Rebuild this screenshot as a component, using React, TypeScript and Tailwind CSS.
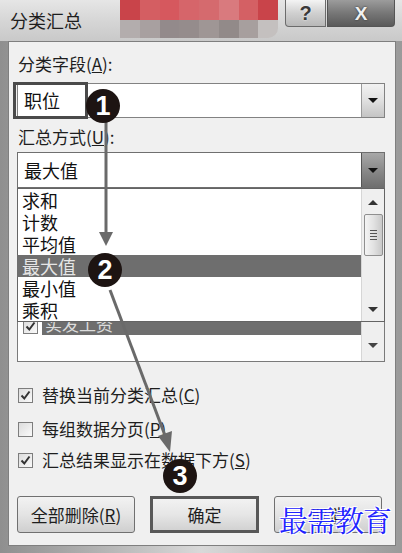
import React from 'react';

const cjk = { fontFamily: '"Noto Sans CJK SC", "Noto Sans", sans-serif' };

function DropButton({ pressed }: { pressed?: boolean }) {
  return (
    <div
      className={
        pressed
          ? 'w-[23px] h-full flex items-center justify-center border-l border-[#555] bg-gradient-to-b from-[#a8a8a8] via-[#8a8a8a] to-[#6f6f6f]'
          : 'w-[23px] h-full flex items-center justify-center border-l border-[#9a9a9a] bg-gradient-to-b from-[#f2f2f2] via-[#e0e0e0] to-[#c4c4c4]'
      }
    >
      <div className="w-0 h-0 border-l-[5px] border-r-[5px] border-t-[5px] border-l-transparent border-r-transparent border-t-[#111]" />
    </div>
  );
}

function CheckBox({ checked }: { checked?: boolean }) {
  return (
    <div className="w-[15px] h-[15px] shrink-0 border border-[#7d7d7d] bg-gradient-to-br from-[#dcdcdc] to-[#fafafa] flex items-center justify-center">
      {checked && (
        <svg width="11" height="11" viewBox="0 0 11 11">
          <path d="M1.5 5.5 L4.3 8.5 L9.5 1.5" fill="none" stroke="#333" strokeWidth="2" />
        </svg>
      )}
    </div>
  );
}

function Marker({ n, className }: { n: string; className: string }) {
  return (
    <div
      className={
        'absolute w-[34px] h-[34px] rounded-full bg-[#1d1412] text-white flex items-center justify-center text-[27px] font-bold leading-none ' +
        className
      }
      style={{ fontFamily: '"Liberation Sans", Arial, sans-serif' }}
    >
      {n}
    </div>
  );
}

export default function App() {
  const items = ['求和', '计数', '平均值', '最大值', '最小值', '乘积'];
  return (
    <div
      className="relative w-[402px] h-[553px] overflow-hidden bg-gradient-to-r from-[#8f8f8f] via-[#d9d9d9] to-[#9a9a9a]"
      style={cjk}
    >
      {/* title bar */}
      <div className="relative h-[41px] bg-gradient-to-b from-[#e6e6e6] via-[#d6d6d6] to-[#c9c9c9]">
        <div className="absolute left-[10px] top-[8px] text-[18px] leading-[24px] text-[#1e1e1e]">分类汇总</div>
        <div className="absolute left-[120px] top-0 w-[158px] h-[38px] flex flex-col rounded-br-[10px] overflow-hidden">
          <div className="h-[20px] flex">
            <div className="flex-1 bg-[#c9444a]" />
            <div className="flex-1 bg-[#d45e62]" />
            <div className="flex-1 bg-[#d6585e]" />
            <div className="flex-1 bg-[#d6656a]" />
            <div className="flex-1 bg-[#d56a6e]" />
            <div className="flex-1 bg-[#d97a7e]" />
            <div className="flex-1 bg-[#d46064]" />
            <div className="flex-1 bg-[#c9444a]" />
          </div>
          <div className="h-[18px] flex">
            <div className="flex-1 bg-[#b3adad]" />
            <div className="flex-1 bg-[#a8a0a0]" />
            <div className="flex-1 bg-[#938a8b]" />
            <div className="flex-1 bg-[#958c8c]" />
            <div className="flex-1 bg-[#9f9695]" />
            <div className="flex-1 bg-[#928a89]" />
            <div className="flex-1 bg-[#a79f9e]" />
            <div className="flex-1 bg-[#c4c0bf]" />
          </div>
        </div>
        <div className="absolute left-[285px] top-0 w-[41px] h-[27px] rounded-bl-[4px] border border-t-0 border-[#6b6b6b] bg-gradient-to-b from-[#f4f4f4] via-[#d0d0d0] to-[#b8b8b8] flex items-center justify-center">
          <span
            className="text-[20px] font-bold leading-none text-[#3a3a3a]"
            style={{ fontFamily: '"Liberation Sans", sans-serif', textShadow: '0 0 2px #fff' }}
          >
            ?
          </span>
        </div>
        <div className="absolute left-[327px] top-0 w-[68px] h-[27px] rounded-br-[4px] border border-t-0 border-[#555] bg-gradient-to-b from-[#9c9c9c] via-[#777] to-[#5a5a5a] flex items-center justify-center">
          <span
            className="text-[19px] font-bold leading-none text-[#f0f0f0]"
            style={{ fontFamily: '"Liberation Sans", sans-serif', textShadow: '0 0 2px #222' }}
          >
            X
          </span>
        </div>
      </div>

      {/* dialog body */}
      <div className="relative ml-[8px] w-[388px] h-[505px] border border-[#7f7f7f] bg-[#f0f0f0] pt-[12px] px-[8px] flex flex-col">
        <div className="text-[17px] leading-[20px] text-[#1e1e1e] pl-[1px]">
          分类字段(<span className="underline">A</span>):
        </div>
        <div className="mt-[9px] h-[35px] w-[368px] border border-[#828282] bg-white flex">
          <div className="flex-1 flex items-center pl-[6px] text-[18px] text-[#111]">职位</div>
          <DropButton />
        </div>

        <div className="mt-[9px] text-[17px] leading-[20px] text-[#1e1e1e] pl-[1px]">
          汇总方式(<span className="underline">U</span>):
        </div>
        <div className="relative mt-[5px] h-[36px] w-[368px]">
          <div className="h-full border border-[#6f6f6f] bg-white flex">
            <div className="flex-1 flex items-center pl-[6px] text-[18px] text-[#111]">最大值</div>
            <DropButton pressed />
          </div>
          {/* open list */}
          <div className="absolute left-0 top-full z-10 w-[368px] h-[134px] border border-[#646464] bg-white flex">
            <div className="flex-1 flex flex-col">
              {items.map((it, i) => (
                <div
                  key={it}
                  className={
                    i === 3
                      ? 'h-[22px] flex items-center pl-[5px] text-[18px] bg-[#6e6e6e] text-[#e6e6e6] -ml-[1px]'
                      : 'h-[22px] flex items-center pl-[4px] text-[18px] text-[#111]'
                  }
                >
                  {it}
                </div>
              ))}
            </div>
            <div className="w-[23px] border-l border-[#d6d6d6] bg-[#efefef] flex flex-col items-center pt-[11px]">
              <div className="w-0 h-0 border-l-[5px] border-r-[5px] border-b-[5px] border-l-transparent border-r-transparent border-b-[#333]" />
              <div className="mt-[9px] w-[19px] h-[42px] rounded-[2px] border border-[#8f8f8f] bg-gradient-to-r from-[#f4f4f4] via-[#e2e2e2] to-[#c9c9c9] flex flex-col items-center justify-center gap-[2px]">
                <div className="w-[7px] h-[1px] bg-[#555]" />
                <div className="w-[7px] h-[1px] bg-[#555]" />
                <div className="w-[7px] h-[1px] bg-[#555]" />
                <div className="w-[7px] h-[1px] bg-[#555]" />
              </div>
              <div className="mt-auto mb-[9px] w-0 h-0 border-l-[5px] border-r-[5px] border-t-[5px] border-l-transparent border-r-transparent border-t-[#333]" />
            </div>
          </div>
        </div>

        {/* summary fields list (behind popup) */}
        <div className="h-[174px] w-[368px] border border-[#7a7a7a] bg-white flex">
          <div className="flex-1 flex flex-col pt-[126px]">
            <div className="h-[20px] flex items-end">
              <div className="ml-[5px] mb-[1px]">
                <CheckBox checked />
              </div>
              <div className="ml-[4px] flex-1 h-full bg-[#6e6e6e] text-[#dcdcdc] text-[17px] leading-[18px] pl-[3px]">实发工资</div>
            </div>
          </div>
          <div className="w-[23px] border-l border-[#d6d6d6] bg-[#efefef] flex flex-col items-center justify-end pb-[13px]">
            <div className="w-0 h-0 border-l-[5px] border-r-[5px] border-t-[5px] border-l-transparent border-r-transparent border-t-[#444]" />
          </div>
        </div>

        <div className="mt-[23px] h-[20px] flex items-center gap-[9px] text-[17px] text-[#1e1e1e] pl-[1px]">
          <CheckBox checked />
          <span>替换当前分类汇总(<span className="underline">C</span>)</span>
        </div>
        <div className="mt-[14px] h-[20px] flex items-center gap-[9px] text-[17px] text-[#1e1e1e] pl-[1px]">
          <CheckBox />
          <span>每组数据分页(<span className="underline">P</span>)</span>
        </div>
        <div className="mt-[11px] h-[20px] flex items-center gap-[9px] text-[17px] text-[#1e1e1e] pl-[1px]">
          <CheckBox checked />
          <span>汇总结果显示在数据下方(<span className="underline">S</span>)</span>
        </div>

        <div className="mt-[26px] h-[37px] flex items-stretch">
          <div className="w-[118px] rounded-[3px] border border-[#707070] bg-gradient-to-b from-[#f2f2f2] via-[#e4e4e4] to-[#cfcfcf] flex items-center justify-center text-[17px] text-[#1e1e1e]">
            全部删除(<span className="underline">R</span>)
          </div>
          <div className="ml-[15px] w-[109px] border-[3px] border-[#585858] bg-gradient-to-b from-[#f2f2f2] via-[#e6e6e6] to-[#d2d2d2] flex items-center justify-center text-[17px] text-[#1e1e1e]">
            确定
          </div>
          <div className="ml-[15px] w-[108px] rounded-[3px] border border-[#707070] bg-gradient-to-b from-[#f2f2f2] via-[#e4e4e4] to-[#cfcfcf] flex items-center justify-center text-[17px] text-[#1e1e1e]">
            取消
          </div>
        </div>
      </div>

      {/* annotations */}
      <div className="absolute left-[13px] top-[82px] w-[75px] h-[37px] border-[3px] border-[#4a4a4a]" />
      <svg className="absolute left-0 top-0 z-20" width="402" height="553" viewBox="0 0 402 553">
        <line x1="106" y1="118" x2="106" y2="234" stroke="#6a6a6a" strokeWidth="3" />
        <polygon points="99,232 113,232 106,246" fill="#6a6a6a" />
        <line x1="110" y1="290" x2="166" y2="438" stroke="#6a6a6a" strokeWidth="3" />
        <polygon points="158,436 172,431 170,452" fill="#6a6a6a" />
      </svg>
      <Marker n="1" className="left-[86px] top-[89px] z-30" />
      <Marker n="2" className="left-[88px] top-[253px] z-30" />
      <Marker n="3" className="left-[163px] top-[459px] z-30" />

      <div
        className="absolute left-[279px] top-[502px] z-30 text-[29px] leading-[36px] tracking-[-1px] text-[#1f24ff]"
        style={{
          fontFamily: '"Noto Serif CJK SC", "Noto Sans CJK SC", serif',
          textShadow: '1px 1px 0 #fff, -1px -1px 0 #fff, 1px -1px 0 #fff, -1px 1px 0 #fff',
        }}
      >
        最需教育
      </div>
    </div>
  );
}
